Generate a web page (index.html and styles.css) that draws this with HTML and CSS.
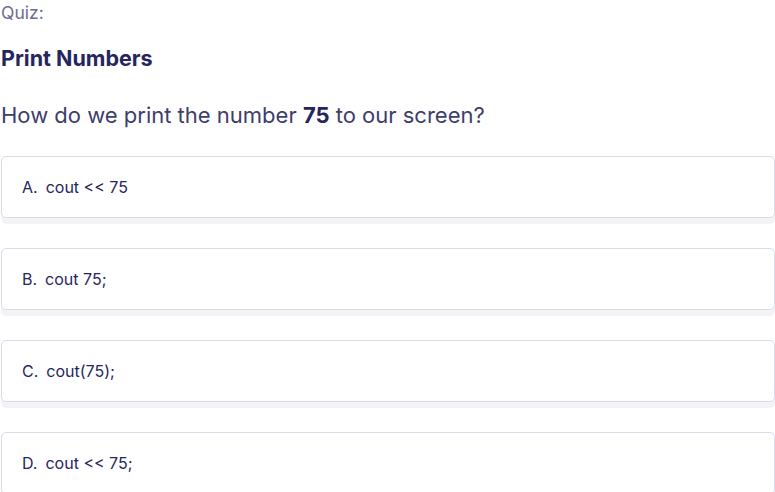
FILE: index.html
```html
<!DOCTYPE html>
<html>
<head>
<meta charset="utf-8">
<link rel="stylesheet" href="styles.css">
</head>
<body>
<div class="quiz">
  <div class="label">Quiz:</div>
  <h2 class="title">Print Numbers</h2>
  <p class="question">How do we print the number <b>75</b> to our screen?</p>
  <div class="options">
    <div class="option"><span class="letter">A.</span>cout &lt;&lt; 75</div>
    <div class="option"><span class="letter">B.</span>cout 75;</div>
    <div class="option"><span class="letter">C.</span>cout(75);</div>
    <div class="option"><span class="letter">D.</span>cout &lt;&lt; 75;</div>
  </div>
</div>
</body>
</html>
```
FILE: styles.css
```css
html, body {
  margin: 0;
  padding: 0;
  background: #ffffff;
}
body {
  font-family: "Inter", "Noto Sans", sans-serif;
  color: #25265e;
}
.quiz {
  padding: 0 0 0 1px;
}
.label {
  font-size: 17.5px;
  line-height: 26px;
  color: #6b6b94;
}
.title {
  margin: 18px 0 0 0;
  font-size: 21.5px;
  line-height: 28px;
  font-weight: 700;
  color: #25265e;
}
.question {
  margin: 28px 0 0 0;
  font-size: 22px;
  line-height: 30px;
  color: #3d3e6b;
}
.question b {
  color: #25265e;
}
.options {
  display: flex;
  flex-direction: column;
  gap: 30px;
  margin-top: 26px;
}
.option {
  height: 62px;
  box-sizing: border-box;
  border: 1px solid #d5dce8;
  border-radius: 5px;
  box-shadow: 0 6px 0 #f3f3f5;
  display: flex;
  align-items: center;
  padding-left: 20px;
  font-size: 16px;
  color: #25265e;
}
.letter {
  margin-right: 8px;
}
```
